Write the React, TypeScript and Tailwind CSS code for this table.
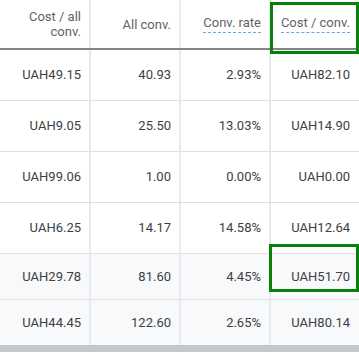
import React from "react";

const rows = [
  { c: ["UAH49.15", "40.93", "2.93%", "UAH82.10"], h: "h-[50px]", bg: "bg-white", line: true },
  { c: ["UAH9.05", "25.50", "13.03%", "UAH14.90"], h: "h-[50px]", bg: "bg-white", line: true },
  { c: ["UAH99.06", "1.00", "0.00%", "UAH0.00"], h: "h-[50px]", bg: "bg-white", line: true },
  { c: ["UAH6.25", "14.17", "14.58%", "UAH12.64"], h: "h-[50px]", bg: "bg-white", line: true },
  { c: ["UAH29.78", "81.60", "4.45%", "UAH51.70"], h: "h-[45px]", bg: "bg-[#f8f9fa]", line: true },
  { c: ["UAH44.45", "122.60", "2.65%", "UAH80.14"], h: "h-[45px]", bg: "bg-[#f8f9fa]", line: false },
];

const widths = ["w-[91px]", "w-[90px]", "w-[90px]", "w-[88px]"];

function Cell({ i, children }: { i: number; children: React.ReactNode }) {
  return (
    <div
      className={`${widths[i]} h-full flex items-center justify-end ${
        i < 3 ? "border-r-2 border-[#e8eaed] pr-[8px]" : "pr-[9px]"
      }`}
    >
      {children}
    </div>
  );
}

function Dashed({ children }: { children: React.ReactNode }) {
  return (
    <span className="border-b border-dashed border-[#6ea0f0] pb-[2px]">{children}</span>
  );
}

export default function App() {
  return (
    <div
      className="relative w-[359px] h-[352px] bg-white overflow-hidden text-[13px]"
      style={{ fontFamily: "Roboto, 'Liberation Sans', sans-serif" }}
    >
      <div className="flex h-[48px] text-[#5f6368] leading-[15px] text-right">
        <Cell i={0}>
          <span>
            Cost / all
            <br />
            conv.
          </span>
        </Cell>
        <Cell i={1}>All conv.</Cell>
        <Cell i={2}>
          <Dashed>Conv. rate</Dashed>
        </Cell>
        <Cell i={3}>
          <Dashed>Cost / conv.</Dashed>
        </Cell>
      </div>
      <div className="h-[2px] bg-[#80868b]" />
      {rows.map((r, idx) => (
        <div
          key={idx}
          className={`flex ${r.h} ${r.bg} text-[#3c4043] box-content ${
            r.line ? "border-b border-[#e0e0e0]" : ""
          }`}
        >
          {r.c.map((v, i) => (
            <Cell key={i} i={i}>
              {v}
            </Cell>
          ))}
        </div>
      ))}
      <div className="h-[7px] bg-[#c4c7cc]" />

      <div className="absolute left-[270px] top-[2px] w-[89px] h-[52px] border-[3px] border-[#078107]" />
      <div className="absolute left-[269px] top-[244px] w-[90px] h-[48px] border-[3px] border-[#078107]" />
    </div>
  );
}
